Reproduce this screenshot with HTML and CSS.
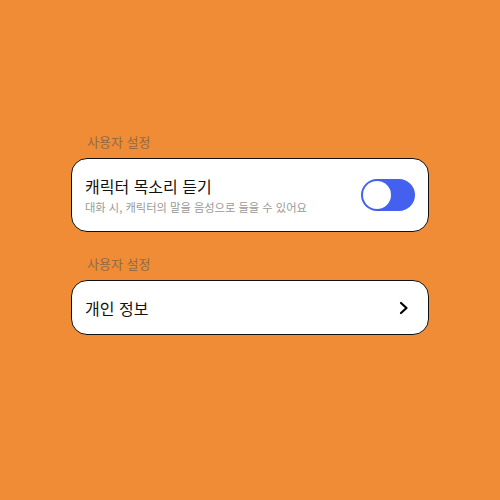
FILE: index.html
```html
<!DOCTYPE html>
<html lang="ko">
	<head>
		<meta charset="UTF-8">
		<title>설정</title>
		<link rel="stylesheet" href="styles.css">
	</head>
	<body>
		<div class="settings">
			<!--음성 설정-->
			<div class="group">
				<p class="group-title">사용자 설정</p>
				<div class="card card-toggle">
					<div class="text">
						<p class="title">캐릭터 목소리 듣기</p>
						<p class="desc">대화 시, 캐릭터의 말을 음성으로 들을 수 있어요</p>
					</div>
					<span class="switch"><span class="knob"></span></span>
				</div>
			</div>
			<!--개인 정보-->
			<div class="group">
				<p class="group-title">사용자 설정</p>
				<div class="card card-link">
					<p class="title">개인 정보</p>
					<svg class="chevron" width="12" height="14" viewBox="0 0 12 14">
						<path d="M3 2 L8.5 7 L3 12" fill="none" stroke="#000" stroke-width="2.2" stroke-linecap="round" stroke-linejoin="round"/>
					</svg>
				</div>
			</div>
		</div>
	</body>
</html>
```

FILE: styles.css
```css
* {
	margin: 0;
	padding: 0
}

html,
body {
	height: 100%;
}

body {
	background-color: #ef8c35;
	font-family: "Noto Sans CJK KR", "Noto Sans", sans-serif;
}

.settings {
	width: 358px;
	margin: 0 auto;
	padding-top: 133px;
	display: flex;
	flex-direction: column;
	gap: 23px;
}

.group-title {
	font-size: 13px;
	line-height: 18px;
	color: #936a48;
	padding-left: 16px;
	margin-bottom: 7px;
}

.card {
	background-color: #fff;
	border: 1px solid #111;
	border-radius: 16px;
	display: flex;
	align-items: center;
	justify-content: space-between;
}

.card-toggle {
	height: 72px;
	padding: 0 13px 0 13px;
}

.card-link {
	height: 53px;
	padding: 0 18px 0 13px;
}

.title {
	font-size: 16px;
	line-height: 22px;
	color: #111;
}

.desc {
	font-size: 11.25px;
	line-height: 16px;
	color: #999;
	margin-top: 2px;
}

.switch {
	width: 54px;
	height: 32px;
	border-radius: 16px;
	background-color: #4361ee;
	padding: 2px;
	box-sizing: border-box;
	display: flex;
	align-items: center;
}

.knob {
	width: 28px;
	height: 28px;
	border-radius: 50%;
	background-color: #fff;
}

.chevron {
	display: block;
}
```
